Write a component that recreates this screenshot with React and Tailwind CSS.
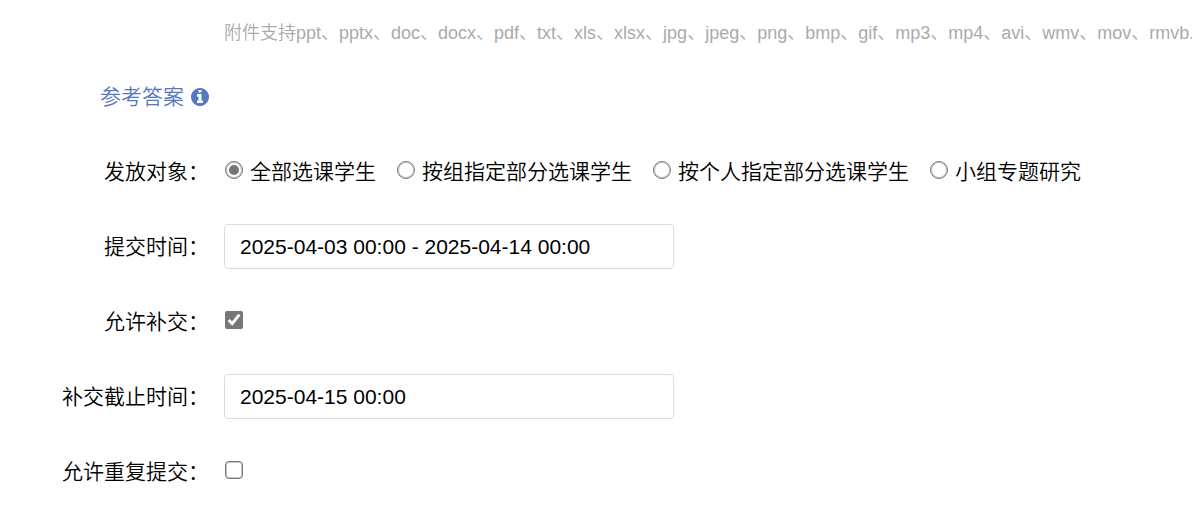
const audiences = [
  { id: "all", label: "全部选课学生" },
  { id: "group", label: "按组指定部分选课学生" },
  { id: "person", label: "按个人指定部分选课学生" },
  { id: "research", label: "小组专题研究" },
];

const inputClass =
  "h-[45px] w-[450px] rounded-[4px] border border-[#dcdcdc] bg-white px-[15px] text-black outline-none";
const radioClass =
  "mb-[3px] ml-px size-[18px] shrink-0 appearance-none rounded-full border border-[#767676] bg-clip-content p-[3px] inset-shadow-[0_0_0_1px_#c4c4c4] checked:bg-[#767676]";
const checkClass =
  "mb-[3px] ml-px size-[18px] shrink-0 appearance-none rounded-[4px] border border-[#767676] accent-[#767676] inset-shadow-[0_0_0_1px_#c4c4c4] checked:appearance-auto checked:inset-shadow-none";

function InfoIcon() {
  return (
    <svg viewBox="128 128 1536 1536" className="size-[18px]" fill="currentColor" aria-hidden="true">
      <path d="M1152 1376v-160q0-14-9-23t-23-9h-96v-512q0-14-9-23t-23-9h-320q-14 0-23 9t-9 23v160q0 14 9 23t23 9h96v320h-96q-14 0-23 9t-9 23v160q0 14 9 23t23 9h448q14 0 23-9t9-23zm-128-896v-160q0-14-9-23t-23-9h-192q-14 0-23 9t-9 23v160q0 14 9 23t23 9h192q14 0 23-9t9-23zm640 416q0 209-103 385.5t-279.5 279.5-385.5 103-385.5-103-279.5-279.5-103-385.5 103-385.5 279.5-279.5 385.5-103 385.5 103 279.5 279.5 103 385.5z" />
    </svg>
  );
}

function Row({ id, label, children }) {
  return (
    <div className="flex min-h-[45px] items-center gap-[15px]">
      <label htmlFor={id} className="w-[209px] shrink-0 text-right">
        {label}：
      </label>
      {children}
    </div>
  );
}

export default function App() {
  return (
    <form className="flex flex-col gap-[29px] overflow-hidden bg-white pb-5 font-['Liberation_Sans','Noto_Sans_CJK_SC',sans-serif] text-[21px] leading-[30px] font-[350] text-black">
      <p className="flex h-[45px] items-end pl-56 text-[18px] leading-6 whitespace-nowrap text-[#aaaaaa]">
        附件支持ppt、pptx、doc、docx、pdf、txt、xls、xlsx、jpg、jpeg、png、bmp、gif、mp3、mp4、avi、wmv、mov、rmvb.
      </p>

      <div className="flex flex-col gap-[30px]">
        <div className="flex h-[45px] items-center pl-[100px]">
          <a href="#answer" className="flex items-center gap-[7px] text-[#5578be]">
            参考答案
            <InfoIcon />
          </a>
        </div>

        <div
          role="radiogroup"
          aria-labelledby="audience-label"
          className="flex min-h-[45px] items-center gap-[15px]"
        >
          <span id="audience-label" className="w-[209px] shrink-0 text-right">
            发放对象：
          </span>
          <div className="flex gap-5 whitespace-nowrap">
            {audiences.map((a, i) => (
              <label key={a.id} className="flex items-center gap-[7px]">
                <input type="radio" name="audience" defaultChecked={i === 0} className={radioClass} />
                {a.label}
              </label>
            ))}
          </div>
        </div>

        <Row id="period" label="提交时间">
          <input id="period" type="text" defaultValue="2025-04-03 00:00 - 2025-04-14 00:00" className={inputClass} />
        </Row>

        <Row id="late" label="允许补交">
          <input id="late" type="checkbox" defaultChecked className={checkClass} />
        </Row>

        <Row id="deadline" label="补交截止时间">
          <input id="deadline" type="text" defaultValue="2025-04-15 00:00" className={inputClass} />
        </Row>

        <Row id="repeat" label="允许重复提交">
          <input id="repeat" type="checkbox" className={checkClass} />
        </Row>
      </div>
    </form>
  );
}
